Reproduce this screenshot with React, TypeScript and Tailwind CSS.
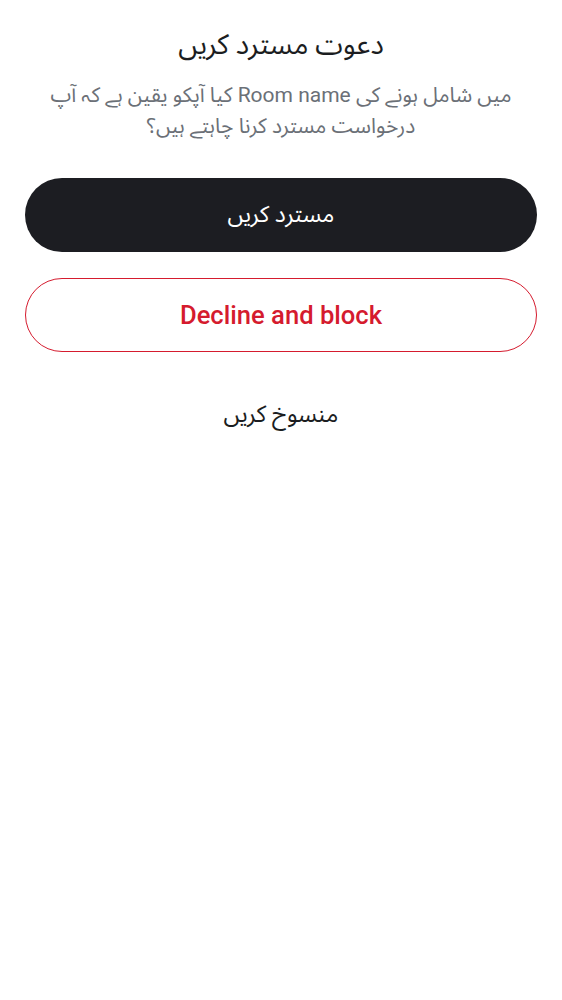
export default function App() {
  return (
    <div
      dir="rtl"
      className="min-h-screen bg-white px-[25px] pt-[27px] font-['Roboto','Noto_Sans_Arabic','DejaVu_Sans',sans-serif]"
    >
      <h1 className="text-center text-[28px] leading-[36px] font-normal text-[#1b1d21]">
        دعوت مسترد کریں
      </h1>
      <p className="mx-auto mt-[17px] max-w-[480px] text-center text-[21px] leading-[31px] text-[#6b7077]">
        میں شامل ہونے کی Room name کیا آپکو یقین ہے کہ آپ درخواست مسترد کرنا چاہتے ہیں؟
      </p>
      <div className="mt-[36px] flex flex-col gap-[26px]">
        <button className="flex h-[74px] items-center justify-center rounded-full bg-[#1c1d22] text-[23px] text-white">
          مسترد کریں
        </button>
        <button className="flex h-[74px] items-center justify-center rounded-full border border-[#d51b2e] bg-white text-[25.6px] font-medium text-[#d51b2e]">
          Decline and block
        </button>
        <button className="flex h-[74px] items-center justify-center text-[23.5px] text-[#1b1d21]">
          منسوخ کریں
        </button>
      </div>
    </div>
  )
}
